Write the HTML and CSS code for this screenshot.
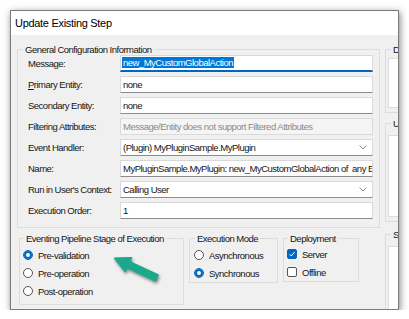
FILE: index.html
```html
<!DOCTYPE html>
<html lang="en">
<head>
  <meta charset="UTF-8">
  <title>Update Existing Step</title>
  <link rel="stylesheet" href="styles.css">
</head>
<body>
  <div class="window">
    <div class="titlebar">Update Existing Step</div>
    <div class="client">
      <div class="main">
        <fieldset class="group general">
          <legend>General Configuration Information</legend>
          <div class="form-grid">
            <label>Message:</label>
            <div class="field focus"><span class="sel">new_MyCustomGlobalAction</span></div>

            <label><u>P</u>rimary Entity:</label>
            <div class="field">none</div>

            <label>Secondary Entity:</label>
            <div class="field">none</div>

            <label>Filtering Attributes:</label>
            <div class="field disabled">Message/Entity does not support Filtered Attributes</div>

            <label>Event Handler:</label>
            <div class="field combo"><span>(Plugin) MyPluginSample.MyPlugin</span><svg class="chev" width="8" height="5" viewBox="0 0 8 5"><path d="M0.5 0.5 L4 4 L7.5 0.5" fill="none" stroke="#8a8a8a" stroke-width="1"/></svg></div>

            <label>Name:</label>
            <div class="field">MyPluginSample.MyPlugin: new_MyCustomGlobalAction of&nbsp; any Entity</div>

            <label>Run in User's Context:</label>
            <div class="field combo"><span>Calling User</span><svg class="chev" width="8" height="5" viewBox="0 0 8 5"><path d="M0.5 0.5 L4 4 L7.5 0.5" fill="none" stroke="#8a8a8a" stroke-width="1"/></svg></div>

            <label>Execution Order:</label>
            <div class="field">1</div>
          </div>
        </fieldset>

        <div class="options">
          <fieldset class="group stage">
            <legend>Eventing Pipeline Stage of Execution</legend>
            <div class="opt"><span class="radio on"></span>Pre-validation</div>
            <div class="opt"><span class="radio"></span>Pre-operation</div>
            <div class="opt"><span class="radio"></span>Post-operation</div>
          </fieldset>
          <fieldset class="group mode">
            <legend>Execution Mode</legend>
            <div class="opt"><span class="radio"></span>Asynchronous</div>
            <div class="opt"><span class="radio on"></span>Synchronous</div>
          </fieldset>
          <fieldset class="group deploy">
            <legend>Deployment</legend>
            <div class="opt"><span class="check on"><svg width="8" height="8" viewBox="0 0 8 8"><path d="M1.5 4.2 L3.3 6 L6.6 2" fill="none" stroke="#fff" stroke-width="1"/></svg></span>Server</div>
            <div class="opt"><span class="check"></span>Offline</div>
          </fieldset>
        </div>

        <svg class="arrow" width="70" height="45" viewBox="0 0 70 45">
          <polygon points="14,13 31.9,12.5 30,16.6 58.5,29.8 55.5,36.2 27,22.9 25.1,27" fill="#1aa98a" stroke="#1aa98a" stroke-width="1" stroke-linejoin="round"/>
        </svg>
      </div>

      <div class="side">
        <fieldset class="group panel desc">
          <legend>Description</legend>
          <div class="box"></div>
        </fieldset>
        <fieldset class="group panel unsecure">
          <legend>Unsecure Configuration</legend>
          <div class="box"></div>
        </fieldset>
        <fieldset class="group panel secure">
          <legend>Secure Configuration</legend>
          <div class="box"></div>
        </fieldset>
      </div>
    </div>
  </div>
</body>
</html>
```

FILE: styles.css
```css
body {
  margin: 0;
  background: #fff;
  font-family: 'Liberation Sans', Arial, sans-serif;
  font-size: 9.5px;
  letter-spacing: -0.5px;
  color: #151515;
}
.window {
  margin: 10px 0 0 10px;
  width: 389px;
  height: 300px;
  box-sizing: border-box;
  border: 1px solid #7a7a7a;
  box-shadow: 1px 2px 7px rgba(0,0,0,0.5);
  background: #f0f0f0;
  overflow: hidden;
  display: flex;
  flex-direction: column;
}
.titlebar {
  flex: none;
  height: 24px;
  line-height: 24px;
  padding-left: 4px;
  background: #fff;
  color: #000;
  font-size: 11px;
  letter-spacing: -0.3px;
}
.client {
  display: flex;
  gap: 5px;
  padding: 9px 0 0 6px;
}
.main {
  flex: none;
  width: 363px;
  position: relative;
}
.side {
  flex: none;
  width: 150px;
}

/* group boxes */
fieldset.group {
  margin: 0;
  padding: 0;
  min-width: 0;
  border: 1px solid #dcdcdc;
}
fieldset.group legend {
  padding: 0 2px;
  line-height: 11px;
}
.general {
  padding: 0 6px 8px 10px !important;
}
.general legend {
  margin-left: -5px;
}
.form-grid {
  display: grid;
  grid-template-columns: 92px 253px;
  grid-auto-rows: 17px;
  row-gap: 4px;
  align-items: center;
}
.form-grid label {
  white-space: nowrap;
}
.field {
  height: 17px;
  box-sizing: border-box;
  padding: 0 2px;
  background: #fff;
  border: 1px solid #d9d9d9;
  border-bottom-color: #8c8c8c;
  line-height: 15px;
  white-space: nowrap;
  overflow: hidden;
}
.field.focus {
  border-bottom: 2px solid #0067c0;
  line-height: 14px;
  padding-left: 1px;
}
.sel {
  background: #0078d7;
  color: #fff;
  padding: 0 1px;
}
.field.disabled {
  background: #f5f5f5;
  border-color: #dadada;
  color: #8a8a8a;
}
.field.combo {
  display: flex;
  align-items: center;
  justify-content: space-between;
  padding-right: 5px;
}

/* bottom option groups */
.options {
  display: flex;
  align-items: flex-start;
  gap: 5px;
  margin: 5px 0 0 2px;
}
.stage {
  width: 160px;
  padding: 2px 0 4px 3px !important;
}
.stage legend { margin-left: 1px; }
.mode {
  width: 83px;
  padding: 2px 0 0 4px !important;
}
.mode legend { margin-left: 1px; }
.deploy {
  width: 71px;
  padding: 1px 0 0 3px !important;
}
.deploy legend { margin-left: 1px; }
.opt {
  display: flex;
  align-items: center;
  gap: 5px;
  height: 18px;
  white-space: nowrap;
}
.radio {
  width: 10px;
  height: 10px;
  box-sizing: border-box;
  border-radius: 50%;
  border: 1px solid #555;
  background: #fff;
}
.radio.on {
  border-color: #0067c0;
  box-shadow: inset 0 0 0 2px #0067c0;
}
.check {
  width: 10px;
  height: 10px;
  box-sizing: border-box;
  border-radius: 2px;
  border: 1px solid #555;
  background: #fff;
  display: flex;
  align-items: center;
  justify-content: center;
}
.check.on {
  border-color: #0067c0;
  background: #0067c0;
}
.arrow {
  position: absolute;
  left: 83px;
  top: 201px;
  filter: drop-shadow(1px 2px 1.5px rgba(0,0,0,0.45));
}

/* right column panels */
.panel {
  padding: 3px 0 4px 2px !important;
}
.panel legend {
  margin-left: 3px;
}
.panel .box {
  background: #fff;
  border: 1px solid #dcdcdc;
  height: 48px;
}
.unsecure {
  margin-top: 5px !important;
  padding-top: 6px !important;
}
.unsecure .box { height: 80px; }
.secure {
  margin-top: 7px !important;
  padding-top: 6px !important;
}
.secure .box { height: 80px; }
```
